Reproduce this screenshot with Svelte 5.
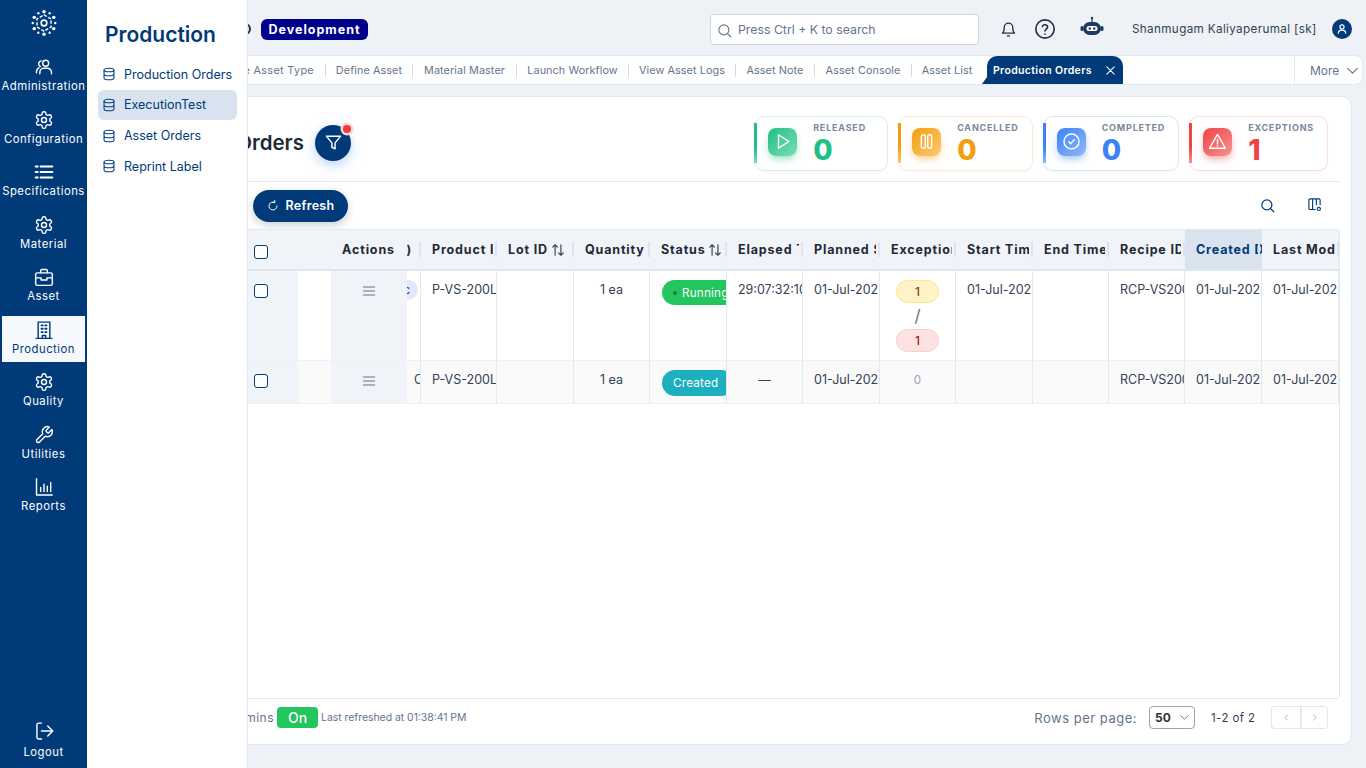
<script>
  const icons = {
    users: '<circle cx="14" cy="7.5" r="3.6"/><path d="M7 20v-1.5a5 5 0 0 1 5-5h4a5 5 0 0 1 5 5V20"/><path d="M8.5 4.6A3.6 3.6 0 0 0 7.7 11.4M3 19v-1.5a5 5 0 0 1 3-4.5"/>',
    gear: '<path d="M12.22 2h-.44a2 2 0 0 0-2 2v.18a2 2 0 0 1-1 1.73l-.43.25a2 2 0 0 1-2 0l-.15-.08a2 2 0 0 0-2.73.73l-.22.38a2 2 0 0 0 .73 2.73l.15.1a2 2 0 0 1 1 1.72v.51a2 2 0 0 1-1 1.74l-.15.09a2 2 0 0 0-.73 2.73l.22.38a2 2 0 0 0 2.73.73l.15-.08a2 2 0 0 1 2 0l.43.25a2 2 0 0 1 1 1.73V20a2 2 0 0 0 2 2h.44a2 2 0 0 0 2-2v-.18a2 2 0 0 1 1-1.73l.43-.25a2 2 0 0 1 2 0l.15.08a2 2 0 0 0 2.73-.73l.22-.39a2 2 0 0 0-.73-2.73l-.15-.08a2 2 0 0 1-1-1.74v-.5a2 2 0 0 1 1-1.74l.15-.09a2 2 0 0 0 .73-2.73l-.22-.38a2 2 0 0 0-2.73-.73l-.15.08a2 2 0 0 1-2 0l-.43-.25a2 2 0 0 1-1-1.73V4a2 2 0 0 0-2-2z"/><circle cx="12" cy="12" r="3"/>',
    list: '<path d="M8 5.5h14M8 12h14M8 18.5h14M2 5.5h2.5M2 12h2.5M2 18.5h2.5" stroke-width="2.4"/>',
    case: '<rect x="2" y="7" width="20" height="15" rx="2"/><path d="M8 7V4.5A1.5 1.5 0 0 1 9.5 3h5A1.5 1.5 0 0 1 16 4.5V7M2 13h6.5v2.5h7V13H22"/>',
    building: '<path d="M5 22V2.5h14V22M2.5 22h19M10 22v-3.5h4V22"/><path d="M9 6.5h1.5M13.5 6.5H15M9 10.5h1.5M13.5 10.5H15M9 14.5h1.5M13.5 14.5H15" stroke-width="2.2"/>',
    wrench: '<path d="M14.7 6.3a1 1 0 0 0 0 1.4l1.6 1.6a1 1 0 0 0 1.4 0l3.77-3.77a6 6 0 0 1-7.94 7.94l-6.91 6.91a2.12 2.12 0 0 1-3-3l6.91-6.91a6 6 0 0 1 7.94-7.94l-3.76 3.76z"/>',
    chart: '<path d="M3 2v19.5h19M8 12.5v5M12 8.5v9M16 11v6.5M20 6.5v11"/>',
    logout: '<path d="M9 21.5H5.5a2 2 0 0 1-2-2v-15a2 2 0 0 1 2-2H9M9 12h13M16.5 6l6 6-6 6"/>'
  };

  const nav = [
    { label: 'Administration', icon: 'users' },
    { label: 'Configuration', icon: 'gear' },
    { label: 'Specifications', icon: 'list' },
    { label: 'Material', icon: 'gear' },
    { label: 'Asset', icon: 'case' },
    { label: 'Production', icon: 'building', active: true },
    { label: 'Quality', icon: 'gear' },
    { label: 'Utilities', icon: 'wrench' },
    { label: 'Reports', icon: 'chart' }
  ];

  const subNav = ['Production Orders', 'ExecutionTest', 'Asset Orders', 'Reprint Label'];

  const tabs = [
    { label: 'Define Asset Type', w: 136 },
    { label: 'Define Asset', w: 87 },
    { label: 'Material Master', w: 104 },
    { label: 'Launch Workflow', w: 112 },
    { label: 'View Asset Logs', w: 107 },
    { label: 'Asset Note', w: 79 },
    { label: 'Asset Console', w: 97 },
    { label: 'Asset List', w: 71 }
  ];

  const kpis = [
    { label: 'RELEASED', value: 0, tone: 'green', shape: 'play' },
    { label: 'CANCELLED', value: 0, tone: 'amber', shape: 'pause' },
    { label: 'COMPLETED', value: 0, tone: 'blue', shape: 'check' },
    { label: 'EXCEPTIONS', value: 1, tone: 'red', shape: 'warn' }
  ];

  const kpiIcons = {
    play: '<path d="M7 3.5v17l13-8.5z"/>',
    pause: '<rect x="5.5" y="3.5" width="5" height="17" rx="2"/><rect x="13.5" y="3.5" width="5" height="17" rx="2"/>',
    check: '<circle cx="12" cy="12" r="9.5"/><path d="M8.5 12.2l2.5 2.5 4.5-5"/>',
    warn: '<path d="M12 3L2 20.5h20z"/><path d="M12 9.5v5.5M12 17.2v.6"/>'
  };

  const cols = [
    { key: 'product', label: 'Product ID', w: 76 },
    { key: 'lot', label: 'Lot ID', w: 77, sort: true },
    { key: 'qty', label: 'Quantity', w: 76, center: true },
    { key: 'status', label: 'Status', w: 77, sort: true },
    { key: 'elapsed', label: 'Elapsed Time', w: 76 },
    { key: 'planned', label: 'Planned Start', w: 77 },
    { key: 'exceptions', label: 'Exceptions', w: 76 },
    { key: 'start', label: 'Start Time', w: 77 },
    { key: 'end', label: 'End Time', w: 76 },
    { key: 'recipe', label: 'Recipe ID/Ver', w: 76 },
    { key: 'created', label: 'Created Date', w: 77, sorted: true },
    { key: 'modified', label: 'Last Modified', w: 77 }
  ];

  const rows = [
    {
      order: 'Exec', statusLabel: 'Running', statusTone: 'running',
      product: 'P-VS-200L-01', lot: '', qty: '1 ea', elapsed: '29:07:32:10',
      planned: '01-Jul-2025', start: '01-Jul-2025', end: '', recipe: 'RCP-VS200L',
      created: '01-Jul-2025', modified: '01-Jul-2025', warn: 1, err: 1
    },
    {
      order: 'Created', statusLabel: 'Created', statusTone: 'created',
      product: 'P-VS-200L-01', lot: '', qty: '1 ea', elapsed: '—',
      planned: '01-Jul-2025', start: '', end: '', recipe: 'RCP-VS200L',
      created: '01-Jul-2025', modified: '01-Jul-2025', warn: 0, err: 0
    }
  ];

  const dots = Array.from({ length: 12 }, (_, i) => {
    const a = (i * Math.PI) / 6;
    return { x: 12 + 10.4 * Math.sin(a), y: 12 - 10.4 * Math.cos(a), r: i % 2 ? 1.1 : 1.6 };
  });
</script>

<div class="page">
  <nav class="rail">
    <svg class="logo" viewBox="0 0 24 24" fill="none" stroke="#fff" stroke-width="1.5">
      {#each dots as d}
        <circle cx={d.x} cy={d.y} r={d.r} fill="#fff" stroke="none" />
      {/each}
      <path d="M12 4.5l6.5 3.75v7.5L12 19.5l-6.5-3.75v-7.5z" stroke-width="1.3" stroke-dasharray="3 1.5" />
      <circle cx="12" cy="12" r="2.6" />
    </svg>
    {#each nav as item}
      <a class="rail-item" class:active={item.active} href="#top">
        <svg viewBox="0 0 24 24" fill="none" stroke="currentColor" stroke-width="1.7" stroke-linecap="round" stroke-linejoin="round">{@html icons[item.icon]}</svg>
        <span>{item.label}</span>
      </a>
    {/each}
    <a class="rail-item logout" href="#top">
      <svg viewBox="0 0 24 24" fill="none" stroke="currentColor" stroke-width="1.7" stroke-linecap="round" stroke-linejoin="round">{@html icons.logout}</svg>
      <span>Logout</span>
    </a>
  </nav>

  <main class="main">
    <aside class="flyout">
      <h2>Production</h2>
      {#each subNav as name, i}
        <a class="sub" class:current={i === 1} href="#top">
          <svg viewBox="0 0 24 24" fill="none" stroke="currentColor" stroke-width="1.8"><ellipse cx="12" cy="5" rx="8.5" ry="3" /><path d="M3.5 5v14c0 1.7 3.8 3 8.5 3s8.5-1.3 8.5-3V5M3.5 12c0 1.7 3.8 3 8.5 3s8.5-1.3 8.5-3" /></svg>
          {name}
        </a>
      {/each}
    </aside>

    <header class="topbar">
      <span class="brand-mark"></span>
      <span class="env">Development</span>
      <div class="search">
        <svg viewBox="0 0 24 24" fill="none" stroke="#64748b" stroke-width="1.8" stroke-linecap="round"><circle cx="11" cy="11" r="8" /><path d="M17 17l5 5" /></svg>
        <span>Press Ctrl + K to search</span>
      </div>
      <svg class="bell" viewBox="0 0 24 24" fill="none" stroke="#1f2f4a" stroke-width="1.8" stroke-linecap="round" stroke-linejoin="round"><path d="M6 9a6 6 0 0 1 12 0c0 6 2.5 8 2.5 8h-17S6 15 6 9M10.5 21h3" /></svg>
      <svg class="help" viewBox="0 0 24 24" fill="none" stroke="#1f2f4a" stroke-width="1.8" stroke-linecap="round"><circle cx="12" cy="12" r="10" /><path d="M9.2 9.2a2.9 2.9 0 0 1 5.6 1c0 1.900-2.800 2.400-2.800 4M12 17.5v.2" /></svg>
      <svg class="robot" viewBox="0 0 24 24" fill="#1f3a63"><rect x="11.4" y="1" width="1.2" height="5" /><circle cx="12" cy="2" r="1.2" /><rect x="3" y="6" width="18" height="13" rx="6.5" /><rect x="0.5" y="10" width="3" height="5" rx="1.5" /><rect x="20.5" y="10" width="3" height="5" rx="1.5" /><rect x="6.5" y="10" width="11" height="5" rx="2.5" fill="#fff" /><circle cx="9.8" cy="12.5" r="1.2" /><circle cx="14.2" cy="12.5" r="1.2" /></svg>
      <span class="user">Shanmugam Kaliyaperumal [sk]</span>
      <span class="avatar">
        <svg viewBox="0 0 24 24" fill="none" stroke="#fff" stroke-width="2" stroke-linecap="round"><circle cx="12" cy="8.5" r="3.5" /><path d="M5.5 19c.5-3.5 3-5 6.5-5s6 1.5 6.5 5" /></svg>
      </span>
    </header>

    <div class="tabs">
      {#each tabs as tab, i}
        <span class="tab" class:sep={i > 0} style="width:{tab.w}px">{tab.label}</span>
      {/each}
      <span class="tab-active">
        Production Orders
        <svg viewBox="0 0 24 24" fill="none" stroke="#fff" stroke-width="2.2" stroke-linecap="round"><path d="M4 4l16 16M20 4L4 20" /></svg>
      </span>
      <span class="more">
        More
        <svg viewBox="0 0 24 24" fill="none" stroke="#64748b" stroke-width="2" stroke-linecap="round" stroke-linejoin="round"><path d="M3 8l9 9 9-9" /></svg>
      </span>
    </div>

    <section class="card">
      <div class="card-head">
        <h1>Production Orders</h1>
        <button class="filter" aria-label="Filter">
          <svg viewBox="0 0 24 24" fill="none" stroke="#fff" stroke-width="1.8" stroke-linejoin="round"><path d="M3 4h18l-7 8.5V20l-4-2v-5.5z" /></svg>
          <span class="filter-dot"></span>
        </button>
        <div class="kpis">
          {#each kpis as k}
            <div class="kpi {k.tone}">
              <span class="tile">
                <svg viewBox="0 0 24 24" fill="none" stroke="#fff" stroke-width="1.8" stroke-linecap="round" stroke-linejoin="round">{@html kpiIcons[k.shape]}</svg>
              </span>
              <div class="kpi-text">
                <span class="kpi-label">{k.label}</span>
                <span class="kpi-value">{k.value}</span>
              </div>
            </div>
          {/each}
        </div>
      </div>

      <div class="toolbar">
        <button class="refresh">
          <svg viewBox="0 0 24 24" fill="none" stroke="#fff" stroke-width="2" stroke-linecap="round" stroke-linejoin="round"><path d="M20 12a8 8 0 1 1-4.5-7.2M15.500 1v4h-4" /></svg>
          Refresh
        </button>
        <svg class="tool-search" viewBox="0 0 24 24" fill="none" stroke="#003a78" stroke-width="2" stroke-linecap="round"><circle cx="11" cy="11" r="8" /><path d="M17 17l5 5" /></svg>
        <svg class="tool-cols" viewBox="0 0 24 24" fill="none" stroke="#003a78" stroke-width="1.8" stroke-linejoin="round"><path d="M14 20H5a2 2 0 0 1-2-2V5a2 2 0 0 1 2-2h14a2 2 0 0 1 2 2v8M9 3v17M15 3v10" /><circle cx="19" cy="19" r="2.5" /></svg>
      </div>

      <div class="table-wrap">
        <table>
          <colgroup>
            <col class="c-check" /><col class="c-blank" /><col class="c-actions" /><col class="c-order" />
            {#each cols as c}<col style="width:{c.w}px" />{/each}
          </colgroup>
          <thead>
            <tr>
              <th class="check-cell"><span class="box"></span></th>
              <th class="plain"></th>
              <th class="actions-cell head-actions">Actions</th>
              <th class="order-head"><div class="order-clip"><span>ID)</span></div><i class="grip"></i></th>
              {#each cols as c}
                <th class:sorted={c.sorted}>
                  <span class="th-text">{c.label}</span>
                  {#if c.sort}
                    <svg class="sort" viewBox="0 0 24 24" fill="none" stroke="#334155" stroke-width="2" stroke-linecap="round" stroke-linejoin="round"><path d="M7 21V3M3 7l4-4 4 4M17 3v18M13 17l4 4 4-4" /></svg>
                  {/if}
                  <i class="grip"></i>
                </th>
              {/each}
            </tr>
          </thead>
          <tbody>
            {#each rows as r, i}
              <tr class:first={i === 0} class:second={i === 1}>
                <td class="check-cell"><span class="box"></span></td>
                <td></td>
                <td class="actions-cell">
                  <svg class="menu" viewBox="0 0 12 10" fill="none" stroke="#64748b" stroke-width="1"><path d="M0 1h12M0 5h12M0 9h12" /></svg>
                </td>
                <td class="order-cell">
                  {#if i === 0}
                    <span class="order-pill">{r.order}</span>
                  {:else}
                    <span class="order-text">{r.order}</span>
                  {/if}
                </td>
                {#each cols as c}
                  <td class:center={c.center}>
                    {#if c.key === 'status'}
                      <span class="status {r.statusTone}">
                        {#if i === 0}<i class="dot"></i>{/if}{r.statusLabel}
                      </span>
                    {:else if c.key === 'exceptions'}
                      {#if r.warn}
                        <div class="exc">
                          <span class="exc-pill warn">{r.warn}</span>
                          <span class="slash">/</span>
                          <span class="exc-pill err">{r.err}</span>
                        </div>
                      {:else}
                        <div class="exc"><span class="zero">0</span></div>
                      {/if}
                    {:else if c.key === 'elapsed' && r.elapsed === '—'}
                      <div class="dash">{r.elapsed}</div>
                    {:else}
                      <span class="val">{r[c.key]}</span>
                    {/if}
                  </td>
                {/each}
              </tr>
            {/each}
          </tbody>
        </table>
      </div>

      <footer class="foot">
        <span class="auto">Auto refresh every 5 mins</span>
        <span class="on">On</span>
        <span class="last">Last refreshed at 01:38:41 PM</span>
        <span class="rpp">Rows per page:</span>
        <span class="select">
          50
          <svg viewBox="0 0 24 24" fill="none" stroke="#64748b" stroke-width="2" stroke-linecap="round" stroke-linejoin="round"><path d="M4 8l8 8 8-8" /></svg>
        </span>
        <span class="range">1-2 of 2</span>
        <span class="pager">
          <span><svg viewBox="0 0 24 24" fill="none" stroke="#a3acb9" stroke-width="2.4" stroke-linecap="round" stroke-linejoin="round"><path d="M15 5l-7 7 7 7" /></svg></span>
          <span><svg viewBox="0 0 24 24" fill="none" stroke="#a3acb9" stroke-width="2.4" stroke-linecap="round" stroke-linejoin="round"><path d="M9 5l7 7-7 7" /></svg></span>
        </span>
      </footer>
    </section>
  </main>
</div>

<style>
  :global(body) {
    margin: 0;
    background: #eef1f6;
    font-family: Inter, "Noto Sans", "Liberation Sans", sans-serif;
    overflow: hidden;
  }

  .page {
    display: flex;
    height: 768px;
    overflow: hidden;
  }

  /* left rail */
  .rail {
    width: 87px;
    flex: none;
    background: #003a78;
    display: flex;
    flex-direction: column;
    align-items: center;
    color: #fff;
  }
  .logo {
    width: 26px;
    height: 26px;
    margin: 10px 0 17px;
  }
  .rail-item {
    width: 83px;
    height: 46px;
    margin-bottom: 6.5px;
    flex: none;
    display: flex;
    flex-direction: column;
    align-items: center;
    padding-top: 4px;
    box-sizing: border-box;
    color: #fff;
    text-decoration: none;
    font-size: 11.3px;
    letter-spacing: 0.5px;
    white-space: nowrap;
  }
  .rail-item svg {
    width: 20px;
    height: 20px;
    margin-bottom: 2px;
  }
  .rail-item.active {
    background: #f5f8fc;
    color: #003a78;
  }
  .logout {
    margin-top: auto;
    margin-bottom: 5px;
  }
  .logout svg {
    margin-bottom: 4px;
  }

  /* flyout over the page */
  .flyout {
    position: absolute;
    left: 0;
    top: 0;
    bottom: 0;
    width: 161px;
    box-sizing: border-box;
    background: #fff;
    border-right: 1px solid #e2e8f0;
    padding: 0 10px 0 11px;
    z-index: 5;
    color: #003a78;
  }
  .flyout h2 {
    margin: 20px 0 9px 7px;
    font-size: 21px;
    line-height: 30px;
    font-weight: 600;
  }
  .sub {
    display: flex;
    align-items: center;
    gap: 8px;
    height: 30px;
    margin-bottom: 0.8px;
    padding-left: 4px;
    border-radius: 6px;
    font-size: 12.5px;
    color: #003a78;
    text-decoration: none;
    white-space: nowrap;
  }
  .sub svg {
    width: 14px;
    height: 14px;
    flex: none;
  }
  .sub.current {
    background: #d9e3ef;
  }

  .main {
    position: relative;
    flex: 1;
    min-width: 0;
    display: flex;
    flex-direction: column;
  }

  /* top bar */
  .topbar {
    height: 55px;
    flex: none;
    display: flex;
    align-items: center;
    padding: 3px 0 0 152px;
    box-sizing: border-box;
  }
  .brand-mark {
    width: 12px;
    height: 12px;
    border: 2px solid #1f2f4a;
    border-radius: 50%;
    box-sizing: border-box;
    margin-right: 10px;
    flex: none;
  }
  .env {
    width: 107px;
    height: 21px;
    flex: none;
    background: #00008b;
    color: #fff;
    border-radius: 6px;
    font-size: 12.5px;
    font-weight: 700;
    letter-spacing: 1px;
    line-height: 21px;
    text-align: center;
  }
  .search {
    margin-left: 342px;
    width: 269px;
    height: 31px;
    flex: none;
    box-sizing: border-box;
    display: flex;
    align-items: center;
    gap: 6px;
    padding-left: 6px;
    background: #fff;
    border: 1px solid #cbd5e1;
    border-radius: 4px;
    font-size: 12.3px;
    color: #64748b;
  }
  .search svg {
    width: 15px;
    height: 15px;
    margin-top: 2px;
  }
  .bell {
    width: 17px;
    height: 17px;
    margin-left: 21px;
    flex: none;
  }
  .help {
    width: 22px;
    height: 22px;
    margin-left: 17px;
    flex: none;
  }
  .robot {
    width: 24px;
    height: 24px;
    margin: -2px 0 0 24px;
    flex: none;
  }
  .user {
    width: 200px;
    margin-left: 28px;
    flex: none;
    font-size: 11.7px;
    letter-spacing: 0.35px;
    color: #334155;
    white-space: nowrap;
  }
  .avatar {
    width: 20px;
    height: 20px;
    border-radius: 50%;
    background: #003a78;
    display: flex;
    align-items: center;
    justify-content: center;
    flex: none;
  }
  .avatar svg {
    width: 14px;
    height: 14px;
  }

  /* tab strip */
  .tabs {
    height: 30px;
    flex: none;
    margin-right: 3px;
    box-sizing: border-box;
    display: flex;
    align-items: center;
    padding-left: 101px;
    background: #fff;
    border: 1px solid #e2e8f0;
    border-radius: 0 8px 8px 0;
  }
  .tab {
    flex: none;
    box-sizing: border-box;
    text-align: center;
    font-size: 10.8px;
    letter-spacing: 0.1px;
    color: #64748b;
    white-space: nowrap;
  }
  .tab:first-child {
    text-align: right;
    padding-right: 11px;
    letter-spacing: 0.35px;
  }
  .tab.sep {
    border-left: 1px solid #d5dce6;
  }
  .tab-active {
    position: relative;
    flex: none;
    width: 136px;
    height: 28px;
    margin-left: 5px;
    padding: 0 7px 0 6px;
    box-sizing: border-box;
    display: flex;
    align-items: center;
    justify-content: space-between;
    background: #003a78;
    color: #fff;
    border-radius: 10px 10px 0 0;
    font-size: 10.5px;
    font-weight: 600;
    letter-spacing: 0.35px;
    white-space: nowrap;
  }
  .tab-active::before {
    content: "";
    position: absolute;
    left: -5px;
    bottom: 0;
    border-bottom: 7px solid #003a78;
    border-left: 5px solid transparent;
  }
  .tab-active svg {
    width: 11px;
    height: 11px;
  }
  .more {
    margin-left: auto;
    width: 68px;
    height: 28px;
    flex: none;
    box-sizing: border-box;
    border-left: 1px solid #e2e8f0;
    display: flex;
    align-items: center;
    gap: 7px;
    padding-left: 15px;
    font-size: 12px;
    color: #64748b;
  }
  .more svg {
    width: 13px;
    height: 13px;
  }

  /* card */
  .card {
    margin: 11px 14px 23px 13px;
    flex: 1;
    min-height: 0;
    box-sizing: border-box;
    display: flex;
    flex-direction: column;
    padding: 0 11px 0 0;
    background: #fff;
    border: 1px solid #e2e8f0;
    border-radius: 10px;
  }
  .card-head {
    height: 85px;
    flex: none;
    margin-left: 12px;
    box-sizing: border-box;
    display: flex;
    align-items: center;
    border-bottom: 1px solid #e2e8f0;
    padding: 6px 12px 0 0;
  }
  h1 {
    width: 191px;
    flex: none;
    margin: 0;
    font-size: 20.5px;
    font-weight: 600;
    color: #1f2937;
    text-align: right;
    white-space: nowrap;
  }
  .filter {
    position: relative;
    width: 36px;
    height: 36px;
    flex: none;
    margin: 1px 0 0 11px;
    padding: 0;
    border: 0;
    border-radius: 50%;
    background: #003a78;
    box-shadow: 0 4px 12px rgba(59, 130, 246, 0.35);
    display: flex;
    align-items: center;
    justify-content: center;
  }
  .filter svg {
    width: 19px;
    height: 19px;
  }
  .filter-dot {
    position: absolute;
    top: 0;
    right: 0;
    width: 8px;
    height: 8px;
    border-radius: 50%;
    background: #f03a3a;
    box-shadow: 0 0 0 2.5px #fbd5d5;
  }
  .kpis {
    margin: 2px 0 0 auto;
    display: flex;
    gap: 10px;
  }
  .kpi {
    position: relative;
    min-width: 134px;
    height: 55px;
    box-sizing: border-box;
    display: flex;
    padding: 11px 13px 0 13px;
    gap: 16px;
    background: #fff;
    border: 1px solid;
    border-radius: 10px;
    box-shadow: 0 1px 3px rgba(15, 23, 42, 0.04);
  }
  .kpi::before {
    content: "";
    position: absolute;
    left: -1px;
    top: 6px;
    bottom: 7px;
    width: 3px;
    background: linear-gradient(var(--tone) 60%, var(--tone-2));
  }
  .kpi.green { --tone: #1fbf85; --tone-2: #7fdcb9; border-color: #d2f2e5; color: #1fbf85; }
  .kpi.amber { --tone: #f59e0b; --tone-2: #fbc874; border-color: #fdecd0; color: #f59e0b; }
  .kpi.blue { --tone: #3b82f6; --tone-2: #8fb8fa; border-color: #d8e6fd; color: #3b82f6; }
  .kpi.red { --tone: #ef4444; --tone-2: #f69292; border-color: #fcdcdc; color: #ef4444; }
  .tile {
    width: 29px;
    height: 28px;
    flex: none;
    border-radius: 8px;
    background: linear-gradient(135deg, var(--tone), var(--tone-2));
    box-shadow: 0 4px 8px -2px var(--tone-2);
    display: flex;
    align-items: center;
    justify-content: center;
  }
  .tile svg {
    width: 19px;
    height: 19px;
  }
  .kpi-text {
    display: flex;
    flex-direction: column;
    margin-top: -6px;
  }
  .kpi-label {
    font-size: 9px;
    font-weight: 700;
    letter-spacing: 0.8px;
    line-height: 12px;
    color: #7c869c;
    white-space: nowrap;
  }
  .kpi-value {
    font-size: 28px;
    font-weight: 800;
    line-height: 32px;
  }

  .toolbar {
    height: 47px;
    flex: none;
    display: flex;
    align-items: center;
    padding-left: 152px;
  }
  .refresh {
    width: 95px;
    height: 32px;
    flex: none;
    padding: 0;
    border: 0;
    border-radius: 16px;
    background: #003a78;
    color: #fff;
    font: 600 12.5px Inter, "Noto Sans", sans-serif;
    letter-spacing: 0.3px;
    display: flex;
    align-items: center;
    justify-content: center;
    gap: 7px;
    box-shadow: 0 3px 8px rgba(15, 23, 42, 0.22);
  }
  .refresh svg {
    width: 12px;
    height: 12px;
  }
  .tool-search {
    width: 15px;
    height: 15px;
    margin-left: auto;
    flex: none;
  }
  .tool-cols {
    width: 15px;
    height: 15px;
    margin: -2px 18px 0 32px;
    flex: none;
  }

  /* table */
  .table-wrap {
    flex: 1;
    min-height: 0;
    margin-left: 147px;
    overflow: hidden;
    border: 1px solid #e2e8f0;
    border-left: 0;
    border-radius: 0 4px 4px 0;
  }
  table {
    width: 1091px;
    table-layout: fixed;
    border-collapse: separate;
    border-spacing: 0;
    font-size: 12.5px;
    color: #334155;
  }
  .c-check { width: 50px; }
  .c-blank { width: 33px; }
  .c-actions { width: 76px; }
  .c-order { width: 14px; }
  th {
    --th: #f0f4f9;
    position: relative;
    height: 41px;
    padding: 0 0 0 11px;
    box-sizing: border-box;
    background: var(--th);
    border-bottom: 2px solid #dde6f1;
    font-size: 12.5px;
    font-weight: 700;
    letter-spacing: 0.85px;
    color: #1f2937;
    text-align: left;
    white-space: nowrap;
    overflow: hidden;
  }
  th.plain {
    padding: 0;
  }
  th.sorted {
    --th: #d9e3ef;
    color: #003a78;
  }
  th.sorted .grip {
    background: transparent;
  }
  .th-text {
    vertical-align: middle;
  }
  .sort {
    width: 14px;
    height: 14px;
    margin-left: -1px;
    vertical-align: middle;
  }
  .grip {
    position: absolute;
    right: 0;
    top: 12px;
    bottom: 12px;
    width: 2px;
    background: #dde4ee;
    box-shadow: -2px 0 0 var(--th);
  }
  .order-head {
    padding: 0 9px 0 0;
  }
  .order-clip {
    display: flex;
    justify-content: flex-end;
    overflow: hidden;
  }
  .order-clip span {
    flex: none;
  }
  td {
    padding: 10px 0 0 11px;
    vertical-align: top;
    box-sizing: border-box;
    border-right: 1px solid #e2e8f0;
    white-space: nowrap;
    overflow: hidden;
    line-height: 18px;
  }
  tr.first td {
    height: 90px;
    border-bottom: 1px solid #eef1f5;
  }
  tr.second td {
    height: 43px;
    background: #fafafa;
    border-bottom: 1px solid #eef1f5;
  }
  td.center {
    text-align: center;
    padding-left: 0;
  }
  tbody td:first-child,
  tbody td:nth-child(2) {
    border-right: 0;
  }
  tbody td.actions-cell {
    border-right: 0;
  }
  .check-cell {
    padding: 0 0 0 6px;
    background: #f0f3f8;
  }
  tr.second td.check-cell,
  tr.second td.actions-cell {
    background: #f0f3f8;
  }
  th.check-cell {
    padding-top: 4px;
  }
  td.check-cell {
    padding-top: 13px;
  }
  .box {
    display: block;
    width: 14px;
    height: 14px;
    box-sizing: border-box;
    border: 1.5px solid #003a78;
    border-radius: 3px;
    background: #fff;
  }
  .actions-cell {
    padding: 0;
    text-align: center;
    background: #f0f3f8;
  }
  .head-actions {
    padding-right: 1px;
  }
  td.actions-cell {
    padding-top: 15px;
  }
  .menu {
    display: block;
    width: 12px;
    height: 10px;
    margin: 0 auto;
  }
  td.order-cell {
    padding: 10px 2px 0 0;
  }
  .order-cell {
    position: relative;
  }
  .order-pill {
    position: absolute;
    right: 2px;
    top: 9px;
    height: 20px;
    padding: 0 8px;
    border-radius: 10px;
    background: #e0e7ff;
    color: #3730a3;
    font-size: 11px;
    line-height: 20px;
  }
  .order-text {
    margin-left: 7px;
  }
  .status {
    display: inline-flex;
    align-items: center;
    width: 76px;
    height: 25px;
    margin: -1px 0 0 1px;
    box-sizing: border-box;
    border-radius: 13px;
    color: #fff;
    font-size: 11.7px;
    letter-spacing: 0.2px;
    padding-left: 11px;
  }
  .status.running {
    background: #22c55e;
  }
  .status.created {
    width: 72px;
    background: #1bafc0;
    height: 26px;
  }
  .dot {
    width: 4px;
    height: 4px;
    border-radius: 50%;
    background: #15803d;
    margin-right: 5px;
    flex: none;
  }
  .exc {
    width: 43px;
    margin: -1px 0 0 5px;
    display: flex;
    flex-direction: column;
    align-items: center;
    color: #64748b;
  }
  .exc-pill {
    width: 43px;
    height: 23px;
    box-sizing: border-box;
    border-radius: 12px;
    border: 1px solid;
    text-align: center;
    font-size: 12px;
    font-weight: 500;
    line-height: 21px;
  }
  .warn {
    background: #fef3c7;
    border-color: #fde68a;
    color: #92400e;
  }
  .err {
    background: #fee2e2;
    border-color: #fecaca;
    color: #991b1b;
  }
  .slash {
    font-size: 17px;
    line-height: 26px;
    height: 26px;
  }
  .zero {
    font-size: 11.5px;
    color: #94a3b8;
    line-height: 20px;
  }
  .dash {
    text-align: center;
    margin-right: 11px;
  }

  /* footer */
  .foot {
    height: 45px;
    flex: none;
    display: flex;
    align-items: center;
    padding: 0 12px 8px 0;
    box-sizing: border-box;
    font-size: 11px;
    color: #64748b;
    white-space: nowrap;
  }
  .auto {
    width: 170px;
    margin-left: 3px;
    flex: none;
    text-align: right;
    font-size: 12px;
    letter-spacing: 0.5px;
  }
  .on {
    width: 41px;
    height: 21px;
    flex: none;
    margin: 0 3px;
    border-radius: 4px;
    background: #22c55e;
    color: #fff;
    font-size: 14px;
    font-weight: 500;
    line-height: 21px;
    text-align: center;
  }
  .last {
    font-size: 10.4px;
  }
  .rpp {
    margin-left: auto;
    font-size: 13px;
    letter-spacing: 0.5px;
    color: #64748b;
  }
  .select {
    width: 46px;
    height: 23px;
    flex: none;
    margin-left: 12px;
    box-sizing: border-box;
    border: 1px solid #a3a3a3;
    border-radius: 4px;
    display: flex;
    align-items: center;
    justify-content: space-between;
    padding: 0 4px 0 5px;
    font-size: 12px;
    font-weight: 700;
    color: #333;
  }
  .select svg {
    width: 11px;
    height: 11px;
  }
  .range {
    width: 44px;
    flex: none;
    margin: 0 16px;
    font-size: 11.5px;
    letter-spacing: 0.4px;
    color: #334155;
  }
  .pager {
    display: flex;
    flex: none;
  }
  .pager span {
    width: 29px;
    height: 23px;
    box-sizing: border-box;
    border: 1px solid #e5e7eb;
    display: flex;
    align-items: center;
    justify-content: center;
  }
  .pager span:first-child {
    border-right: 0;
    border-radius: 4px 0 0 4px;
  }
  .pager span:last-child {
    border-left: 2px solid #e5e7eb;
    border-radius: 0 4px 4px 0;
    width: 28px;
  }
  .pager svg {
    width: 9px;
    height: 9px;
  }
</style>
